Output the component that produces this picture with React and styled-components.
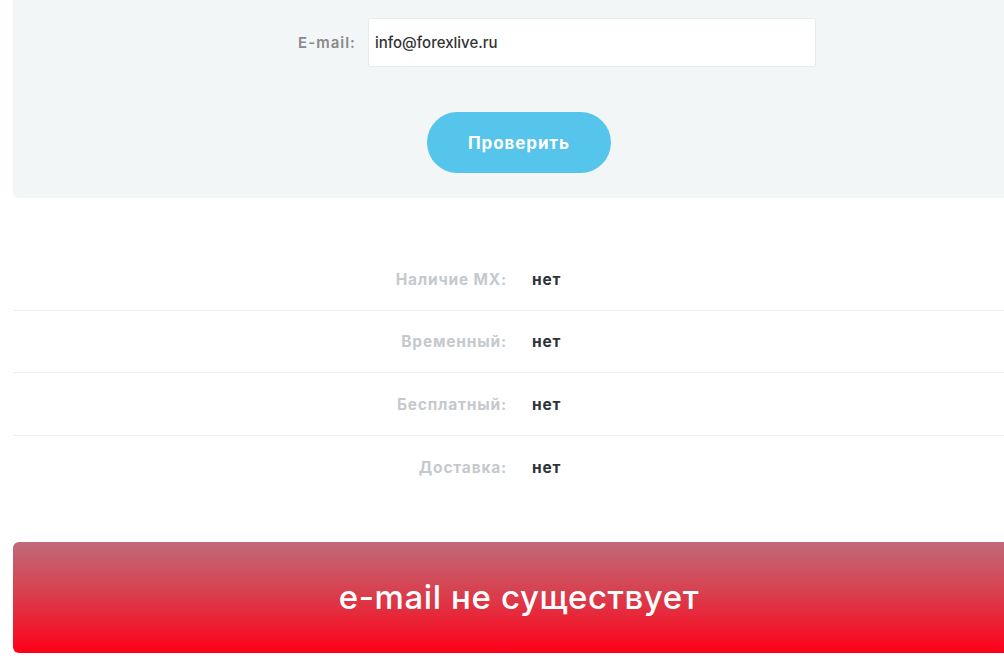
import React from 'react';
import styled, { createGlobalStyle } from 'styled-components';

const GlobalStyle = createGlobalStyle`
  html, body {
    margin: 0;
    background: #fff;
    overflow: hidden;
  }
  body {
    font-family: Inter, 'Open Sans', sans-serif;
  }
`;

const Page = styled.div`
  margin-left: 13px;
  width: 1012px;
`;

const CheckPanel = styled.form`
  background: #f3f6f7;
  border-radius: 0 0 6px 6px;
  padding: 18px 0 25px;
  display: flex;
  flex-direction: column;
  align-items: center;
  gap: 45px;
`;

const FieldRow = styled.label`
  display: flex;
  align-items: center;
  gap: 12px;
  margin-left: 76px;
`;

const FieldLabel = styled.span`
  font-size: 15px;
  font-weight: 600;
  letter-spacing: 1px;
  color: #8a8a8a;
`;

const Input = styled.input`
  width: 448px;
  height: 49px;
  box-sizing: border-box;
  border: 1px solid #e9ecee;
  border-radius: 2px;
  background: #fff;
  padding: 0 6px;
  font-family: inherit;
  font-size: 15px;
  font-weight: 500;
  color: #333;
  outline: none;
`;

const SubmitButton = styled.button`
  width: 184px;
  height: 61px;
  border: none;
  border-radius: 31px;
  background: #55c5ec;
  color: #fff;
  font-family: inherit;
  font-size: 17px;
  font-weight: 700;
  letter-spacing: 0.9px;
  cursor: pointer;
`;

const Results = styled.div`
  margin-top: 50px;
`;

const ResultRow = styled.div`
  display: grid;
  grid-template-columns: 494px 1fr;
  column-gap: 25px;
  align-items: center;
  box-sizing: border-box;
  height: 62.5px;
  padding-top: 1px;
  border-bottom: 1px solid #eceeef;
  &:last-child {
    border-bottom: none;
  }
`;

const ResultLabel = styled.span`
  text-align: right;
  font-size: 15.5px;
  font-weight: 700;
  letter-spacing: 0.8px;
  color: #c5c9cd;
`;

const ResultValue = styled.span`
  font-size: 15.5px;
  font-weight: 700;
  letter-spacing: 0.8px;
  color: #2f3237;
`;

const Verdict = styled.div`
  margin-top: 44px;
  height: 111px;
  border-radius: 6px;
  background: linear-gradient(to bottom, #c06a78 0%, #d8404f 45%, #ff0018 100%);
  display: flex;
  align-items: center;
  justify-content: center;
  padding-bottom: 2px;
  box-sizing: border-box;
  color: #fff;
  font-size: 33px;
  font-weight: 500;
  letter-spacing: 0.6px;
`;

const rows = [
  ['Наличие MX:', 'нет'],
  ['Временный:', 'нет'],
  ['Бесплатный:', 'нет'],
  ['Доставка:', 'нет'],
];

export default function App() {
  return (
    <>
      <GlobalStyle />
      <Page>
        <CheckPanel onSubmit={(e) => e.preventDefault()}>
          <FieldRow>
            <FieldLabel>E-mail:</FieldLabel>
            <Input defaultValue="info@forexlive.ru" />
          </FieldRow>
          <SubmitButton type="submit">Проверить</SubmitButton>
        </CheckPanel>
        <Results>
          {rows.map(([label, value]) => (
            <ResultRow key={label}>
              <ResultLabel>{label}</ResultLabel>
              <ResultValue>{value}</ResultValue>
            </ResultRow>
          ))}
        </Results>
        <Verdict>e-mail не существует</Verdict>
      </Page>
    </>
  );
}
